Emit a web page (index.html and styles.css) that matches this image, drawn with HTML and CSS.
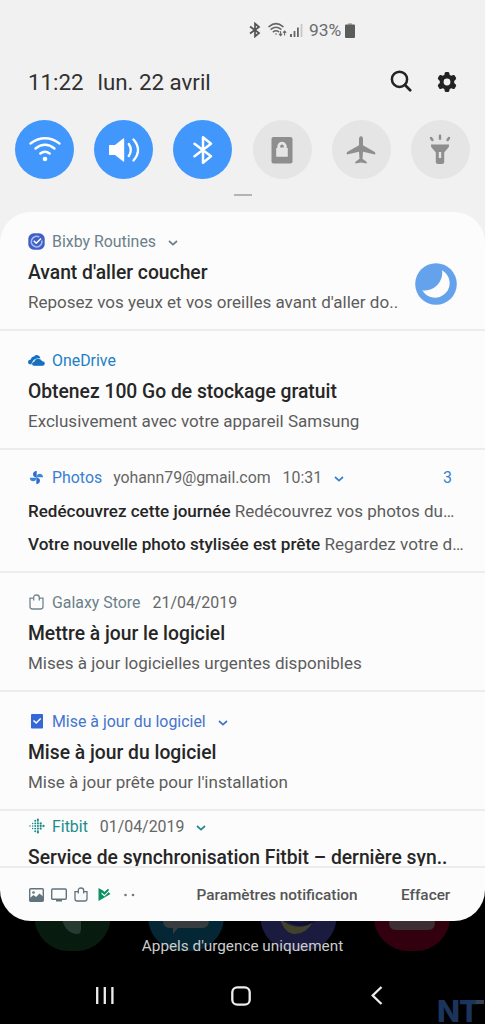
FILE: index.html
```html
<!DOCTYPE html>
<html lang="fr">
<head>
<meta charset="utf-8">
<title>Notifications</title>
<link rel="stylesheet" href="styles.css">
</head>
<body>
<div class="phone">
  <header class="status">
    <svg class="status-bt" width="12" height="16" viewBox="0 0 12 16" fill="none" stroke="#555" stroke-width="1.7"><path d="M1 4.5l9 6.5-4 3.5V1.5l4 3.5-9 6.5"/></svg>
    <svg class="status-wifi" width="20" height="16" viewBox="0 0 20 16" fill="none" stroke="#666" stroke-width="1.5" stroke-linecap="round"><path d="M1 4.6q7-6 14 0M3.2 7.2q4.800-4 9.600 0M5.400 9.700q2.600-2 5.200 0"/><circle cx="8" cy="12" r=".8" fill="#666" stroke="none"/><path d="M12.600 9.500v4m-1.300-1.300l1.300 1.400 1.300-1.400M16.600 13V9m-1.300 1.300L16.600 9l1.300 1.300" stroke-width="1.100"/></svg>
    <svg class="status-signal" width="13" height="15" viewBox="0 0 13 15"><path d="M0 11h2v3H0zM3.600 8h1.800v6H3.600zM7 4.500h1.800V14H7z" fill="#666"/><path d="M10.600 1h1.800v13h-1.800z" fill="#c8c8c8"/></svg>
    <span class="status-text">93%</span>
    <svg width="10" height="15" viewBox="0 0 10 15"><path d="M3 0h4v2H3z" fill="#bbb"/><path d="M1 1.500h8q1 0 1 1V14q0 1-1 1H1q-1 0-1-1V2.500q0-1 1-1z" fill="#5c5c5c"/></svg>
  </header>
  <div class="clock-row">
    <span class="time">11:22</span><span class="date">lun. 22 avril</span>
    <svg class="search" width="22" height="22" viewBox="0 0 22 22" fill="none" stroke="#222"><circle cx="9.500" cy="9.300" r="7.600" stroke-width="2.500"/><path d="M15 15l5.200 5.200" stroke-width="2.700" stroke-linecap="round"/></svg>
    <svg class="gear" width="20" height="20" viewBox="0 0 20 20"><path fill="#222" fill-rule="evenodd" d="M7.800.8Q8 0 9 0h2q1 0 1.200.8l.5 2.100 1.500.9 2-.7q1-.3 1.500.5l1.300 2.200q.5.900-.3 1.600l-1.500 1.500v2.200l1.500 1.500q.8.700.3 1.600l-1.300 2.200q-.5.800-1.500.5l-2-.7-1.500.9-.5 2.100Q12 20 11 20H9q-1 0-1.200-.8l-.5-2.100-1.500-.9-2 .7q-1 .3-1.500-.5L1 14.200q-.5-.9.300-1.600l1.500-1.500V8.900L1.300 7.400Q.5 6.700 1 5.800l1.300-2.200q.5-.8 1.500-.5l2 .7 1.500-.9zM10 6.600a3.400 3.400 0 1 0 0 6.800a3.400 3.400 0 0 0 0-6.800z"/></svg>
  </div>
  <div class="toggles">
    <div class="toggle on"><svg width="34" height="34" viewBox="0 0 34 34" fill="none" stroke="#fff" stroke-width="2.300" stroke-linecap="round"><path d="M2.500 10.500q14.500-10.500 29 0M7.500 15.500q9.500-7.500 19 0M12.300 20.500q4.700-3.600 9.400 0"/><circle cx="17" cy="26" r="2.300" fill="#fff" stroke="none"/></svg></div>
    <div class="toggle on"><svg width="34" height="34" viewBox="0 0 34 34" fill="none" stroke="#fff" stroke-width="2.300" stroke-linecap="round"><path d="M2 12h6l8.200-6.500q1-.7 1 .5v22q0 1.200-1 .5L8 22H2z" fill="#fff" stroke="none"/><path d="M21.800 11q4 6 0 12M26.500 6.500q9 10.500 0 21"/></svg></div>
    <div class="toggle on"><svg width="34" height="34" viewBox="0 0 34 34" fill="none" stroke="#fff" stroke-width="2.500" stroke-linecap="round" stroke-linejoin="round"><path d="M8.500 10.800l16.500 12.500-8 6.500V4.200l8 6.500L8.500 23.200"/></svg></div>
    <div class="toggle"><svg width="34" height="34" viewBox="0 0 34 34"><rect x="6.500" y="4" width="21" height="26.500" rx="2" fill="#8e8e8e"/><path d="M11.200 15h1.100v-1.500a4.700 4.700 0 0 1 9.400 0V15h1.100v8.800H11.200z" fill="#e5e5e5"/><path d="M15.200 14.500v-1.200a1.800 1.800 0 0 1 3.600 0v1.200z" fill="#8e8e8e"/></svg></div>
    <div class="toggle"><svg width="34" height="34" viewBox="0 0 34 34"><path fill="#8e8e8e" d="M17 3.300q2 0 2 3v6l11.800 6.700q1 1 .3 2.500L19 18.700l-.5 7 3.900 3q.7.600.3 1.800L17 29.500l-5.700 1q-.4-1.200.3-1.800l3.900-3-.5-7-12.100 2.800q-.7-1.500.3-2.500L15 12.300v-6q0-3 2-3z"/></svg></div>
    <div class="toggle"><svg width="34" height="34" viewBox="0 0 34 34"><path fill="#8e8e8e" fill-rule="evenodd" d="M8 11.500h18v1.500q0 1-1 2l-3.800 4.500V29q0 2-2 2h-4.400q-2 0-2-2v-9.500L9 15q-1-1-1-2zM15.800 19v6h2.400v-6z"/><path d="M17 2.800v3M8 5l1.400 2M26 5l-1.400 2" stroke="#8e8e8e" stroke-width="2.500" stroke-linecap="round"/></svg></div>
  </div>
  <div class="handle"></div>

  <main class="panel">
    <article class="note">
      <div class="with-thumb">
        <div class="body">
          <div class="head slate"><span class="icon"><svg width="17" height="17" viewBox="0 0 17 17" fill="none"><rect x=".3" y=".3" width="16.400" height="16.400" rx="5.500" fill="#4260c4"/><path d="M13.800 7.500A5.300 5.300 0 1 1 11.200 4" stroke="#a9bdf5" stroke-width="1.500"/><path d="M5.800 7.800l2.400 2.400 4.800-4.700" stroke="#fff" stroke-width="1.600"/></svg></span><span class="app">Bixby Routines</span><svg class="chev" viewBox="0 0 10 6"><path d="M1 1l4 3.600L9 1"/></svg></div>
          <h2>Avant d'aller coucher</h2>
          <p>Reposez vos yeux et vos oreilles avant d'aller do..</p>
        </div>
        <svg class="thumb" width="42" height="42" viewBox="0 0 42 42"><circle cx="21" cy="21" r="20.800" fill="#64a3ec"/><path d="M27 7.300A14.600 14.600 0 1 1 7.300 27.300A17.500 17.500 0 0 0 27 7.300z" fill="#fcfcfc"/></svg>
      </div>
    </article>
    <article class="note">
      <div class="head azure"><span class="icon"><svg width="17" height="11" viewBox="0 0 17 11" fill="#1570c0"><path d="M3.500 9.500Q0 9.500 0 7q0-2.300 2.700-2.600Q3.500 1.300 6 1.500 8-.8 10.500.6q1.700 1 1.900 2.700L8.600 3.800Q4.500 4.400 3.500 9.500z"/><path d="M6.300 11q-2.500 0-2.500-2.200 0-2 2.500-2.400.5-2.900 3.400-2.900 3.100-.3 4.500 2.500 2.800.2 2.800 2.600Q17 11 14.600 11z" stroke="#fcfcfc" stroke-width=".4"/></svg></span><span class="app">OneDrive</span></div>
      <h2>Obtenez 100 Go de stockage gratuit</h2>
      <p>Exclusivement avec votre appareil Samsung</p>
    </article>
    <article class="note photos">
      <div class="head blue"><span class="icon"><svg width="15" height="15" viewBox="0 0 15 15"><path d="M7.700 7.700V.8Q4 1.500 4 4.500q0 1.500 1.200 2.300z" fill="#2f6dcc"/><path d="M7.300 7.300h6.900Q13.600 3.700 10.700 3.700q-2 0-2.600 1.500z" fill="#3a86d8"/><path d="M7.300 7.300v6.900q3.700-.6 3.700-3.600 0-1.600-1.300-2.400z" fill="#2f6dcc"/><path d="M7.700 7.700H.7Q1.200 11.200 4.200 11.200q2 0 2.600-1.500z" fill="#3a86d8"/></svg></span><span class="app">Photos</span><span class="meta mail">yohann79@gmail.com</span><span class="meta">10:31</span><svg class="chev" viewBox="0 0 10 6"><path d="M1 1l4 3.600L9 1"/></svg><span class="count">3</span></div>
      <p class="line"><b>Redécouvrez cette journée</b> <span>Redécouvrez vos photos du…</span></p>
      <p class="line"><b>Votre nouvelle photo stylisée est prête</b> <span>Regardez votre d…</span></p>
    </article>
    <article class="note">
      <div class="head slate"><span class="icon"><svg width="15" height="16" viewBox="0 0 15 16" fill="none" stroke="#71858d" stroke-width="1.300"><path d="M4.500 4.200H1v8.300Q1 15 3.500 15h8q2.500 0 2.500-2.500V4.200h-3.500M4.700 6.500v-3q0-2.500 2.800-2.500t2.800 2.500v3"/></svg></span><span class="app">Galaxy Store</span><span class="meta">21/04/2019</span></div>
      <h2>Mettre à jour le logiciel</h2>
      <p>Mises à jour logicielles urgentes disponibles</p>
    </article>
    <article class="note">
      <div class="head royal"><span class="icon"><svg width="12" height="15" viewBox="0 0 12 15"><rect width="12" height="14.500" rx="1" fill="#3468d6"/><path d="M2.500 6.500L5.200 9l4.500-4.500" fill="none" stroke="#fff" stroke-width="1.500"/></svg></span><span class="app">Mise à jour du logiciel</span><svg class="chev" viewBox="0 0 10 6"><path d="M1 1l4 3.600L9 1"/></svg></div>
      <h2>Mise à jour du logiciel</h2>
      <p>Mise à jour prête pour l'installation</p>
    </article>
    <article class="note clipped">
      <div class="head teal"><span class="icon"><svg width="16" height="16" viewBox="0 0 16 16" fill="none" stroke="#198c8c" stroke-linecap="round"><path d="M1 8h.01M3.600 5.400h.01M3.600 8h.01M3.600 10.600h.01" stroke-width="1.500"/><path d="M6.200 2.800h.01M6.200 5.400h.01M6.200 8h.01M6.200 10.600h.01M6.200 13.200h.01" stroke-width="1.900"/><path d="M8.900 1.600h.01M8.900 2.800h.01M8.900 5.400h.01M8.900 8h.01M8.900 10.600h.01M8.900 13.200h.01M8.900 14.400h.01" stroke-width="2.100"/><path d="M11.700 5.400h.01M11.700 8h.01M11.700 10.600h.01M14.500 8h.01" stroke-width="2.300"/></svg></span><span class="app">Fitbit</span><span class="meta">01/04/2019</span><svg class="chev" viewBox="0 0 10 6"><path d="M1 1l4 3.600L9 1"/></svg></div>
      <h2>Service de synchronisation Fitbit – dernière syn..</h2>
    </article>
    <footer class="actions">
      <div class="tray">
        <svg width="15" height="14" viewBox="0 0 15 14"><rect x=".7" y=".7" width="13.600" height="12.600" rx="1" fill="none" stroke="#60747e" stroke-width="1.400"/><circle cx="4.500" cy="4.500" r="1.300" fill="#60747e"/><path d="M1 10l3.500-3 2.500 2 3.500-3.500L14 8.500V13H1z" fill="#60747e"/></svg>
        <svg width="16" height="14" viewBox="0 0 16 14"><rect x=".7" y="1" width="14.600" height="10.300" rx="1" fill="none" stroke="#60747e" stroke-width="1.400"/><path d="M5 12.500h6" stroke="#60747e" stroke-width="1.800"/></svg>
        <svg width="14" height="15" viewBox="0 0 14 15" fill="none" stroke="#60747e" stroke-width="1.300"><path d="M4 4.700H1v7Q1 14 3.300 14h7.400Q13 14 13 11.700v-7h-3M4.300 6.500v-3Q4.300 1 7 1t2.700 2.500v3"/></svg>
        <svg class="play" width="13" height="13" viewBox="0 0 13 13"><path d="M.5 0L5 2.500 6.500 4 9 2.500 12.500 6 .5 13z" fill="#0d9163"/><path d="M3.600 5l2.700 2.700 4.800-4.800" fill="none" stroke="#fcfcfc" stroke-width="1.100"/><path d="M6.500 4L10 .8l1.200 1.200-4.700 4.500L4 4z" fill="#0d9163"/></svg>
        <svg class="more" width="11" height="4" viewBox="0 0 11 4" fill="#777"><circle cx="1.500" cy="2" r="1.300"/><circle cx="9" cy="2" r="1.300"/></svg>
      </div>
      <span class="action params">Paramètres notification</span><span class="action">Effacer</span>
    </footer>
  </main>

  <section class="home">
    <svg class="dock" width="485" height="80" viewBox="0 0 485 80">
      <rect x="34.500" y="2" width="76" height="76" rx="34" fill="#071c0f"/><path d="M61 40q2 20 16 21 4 0 4-5V40z" fill="#293a32"/>
      <rect x="148" y="2" width="76" height="76" rx="34" fill="#052635"/><path d="M163 40h46v7q0 8-7 8h-24l-5 6v-6h-3q-7 0-7-8z" fill="#393c3e"/>
      <rect x="260.500" y="2" width="76" height="76" rx="34" fill="#1b1b40"/><path d="M280 46q18 14 33 3-7 12-18 12-10 0-15-15z" fill="#42412b"/><path d="M284 46q17 8 32-1v3q-16 10-32-2z" fill="#101130"/>
      <rect x="374" y="2" width="76" height="76" rx="34" fill="#32000f"/><path d="M389 40h46v9q0 8-7 8h-32q-7 0-7-8z" fill="#3c2e32"/>
    </svg>
    <span class="carrier">Appels d'urgence uniquement</span>
  </section>
  <nav class="navbar">
    <svg width="20" height="19" viewBox="0 0 20 19"><path d="M2.200 1v17M9.800 1v17M17.400 1v17" stroke="#eee" stroke-width="2.300"/></svg>
    <svg width="20" height="20" viewBox="0 0 20 20"><rect x="1.300" y="1.300" width="17.400" height="17.400" rx="5" fill="none" stroke="#eee" stroke-width="2.300"/></svg>
    <svg width="12" height="19" viewBox="0 0 12 19"><path d="M10.500 1L1.700 9.500l8.800 8.500" fill="none" stroke="#eee" stroke-width="2.300"/></svg>
    <div class="mark"><span>NT</span><i></i></div>
  </nav>
</div>
</body>
</html>
```
FILE: styles.css
```css
* { box-sizing: border-box; }
body { margin: 0; font-family: Roboto, sans-serif; color: #5c5c5c; }
.phone {
  width: 485px; height: 1024px; overflow: hidden;
  background: linear-gradient(#f1f1f1 500px, #000 500px);
  display: flex; flex-direction: column;
}
svg { display: block; flex: none; }
span, h2, p, b { white-space: nowrap; }

.status { height: 60px; padding-left: 249px; display: flex; align-items: center; }
.status-wifi { margin-left: 7px; }
.status-signal { margin-left: 2px; }
.status-text { font-size: 17.400px; color: #6c6c6c; margin: 0 4px 0 6px; width: 32px; }

.clock-row { height: 44px; display: flex; align-items: center; padding: 0 28px; color: #303030; font-size: 22.300px; }
.date { margin-left: 14px; }
.search { margin: -2px 0 0 auto; }
.gear { margin: -1px 0 0 25px; }

.toggles { display: flex; justify-content: space-between; padding: 16px 15px 0; }
.toggle { width: 59px; height: 59px; border-radius: 50%; background: #e5e5e5; display: grid; place-items: center; }
.toggle.on { background: #4297fc; }
.handle { width: 18px; height: 2px; margin: 15px auto 0; background: #b4b4b4; }

.panel { margin-top: 16px; height: 709px; flex: none; background: #fcfcfc; border-radius: 31px; overflow: hidden; position: relative; z-index: 1; }
.note { height: 119px; padding: 17px 28px 0; border-bottom: 2px solid #ececec; overflow: hidden; }
.with-thumb { display: flex; justify-content: space-between; align-items: flex-start; }
.thumb { margin-top: 34px; }
.head { height: 24px; display: flex; align-items: center; font-size: 15.900px; }
.icon { width: 24px; padding-right: 7px; display: flex; justify-content: center; }
.meta { margin-left: 12px; color: #666; }
.mail { margin-left: 11px; letter-spacing: -0.050px; }
.chev { width: 10px; height: 6px; margin: 3px 0 0 12px; fill: none; stroke: currentColor; stroke-width: 1.700; }
.count { margin-left: auto; margin-right: 5px; }
h2 { margin: 7px 0 0; font-size: 19.300px; line-height: 26px; font-weight: 500; color: #262626; }
p { margin: 4px 0 0; font-size: 17.030px; line-height: 24px; }
.slate { color: #6b808a; }
.azure { color: #227fc4; }
.blue { color: #397fd2; }
.royal { color: #4574cc; }
.teal { color: #208c8c; }
.photos { height: 123px; padding-top: 15px; }
.line { margin-top: 9px; }
.photos .head + .line { margin-top: 10px; }
.line b { font-weight: 500; color: #262626; }
.line:last-child { font-size: 17.100px; }
.clipped { height: 57px; padding-top: 3px; }
.clipped h2 { margin-top: 7px; }

.actions { height: 53px; display: flex; align-items: center; padding: 0 0 0 29px; }
.tray { display: flex; align-items: center; gap: 7px; width: 167.500px; }
.play { margin-left: 3px; }
.more { margin-left: 6px; }
.action { font-size: 15.350px; font-weight: 500; color: #555; }
.params { width: 204.500px; }

.home { height: 46px; display: grid; flex: none; }
.dock { grid-area: 1 / 1; margin-top: -48px; }
.carrier { grid-area: 1 / 1; align-self: start; justify-self: center; margin-top: 15px; font-size: 15.300px; line-height: 20px; color: #ccc; z-index: 1; }
.navbar { height: 57px; display: flex; align-items: center; padding: 0 0 0 95px; position: relative; }
.navbar > svg:nth-child(2) { margin-left: 116px; }
.navbar > svg:nth-child(3) { margin-left: 120px; }
.mark { position: absolute; right: 0; bottom: 0; width: 48px; height: 25px; display: flex; align-items: flex-start; color: #1b345b; font: 800 30px/24px Inter, sans-serif; letter-spacing: -1px; }
.mark span { display: block; height: 24px; width: 39px; }
.mark i { width: 8px; height: 4px; margin-top: 1px; background: #35414f; }
```
